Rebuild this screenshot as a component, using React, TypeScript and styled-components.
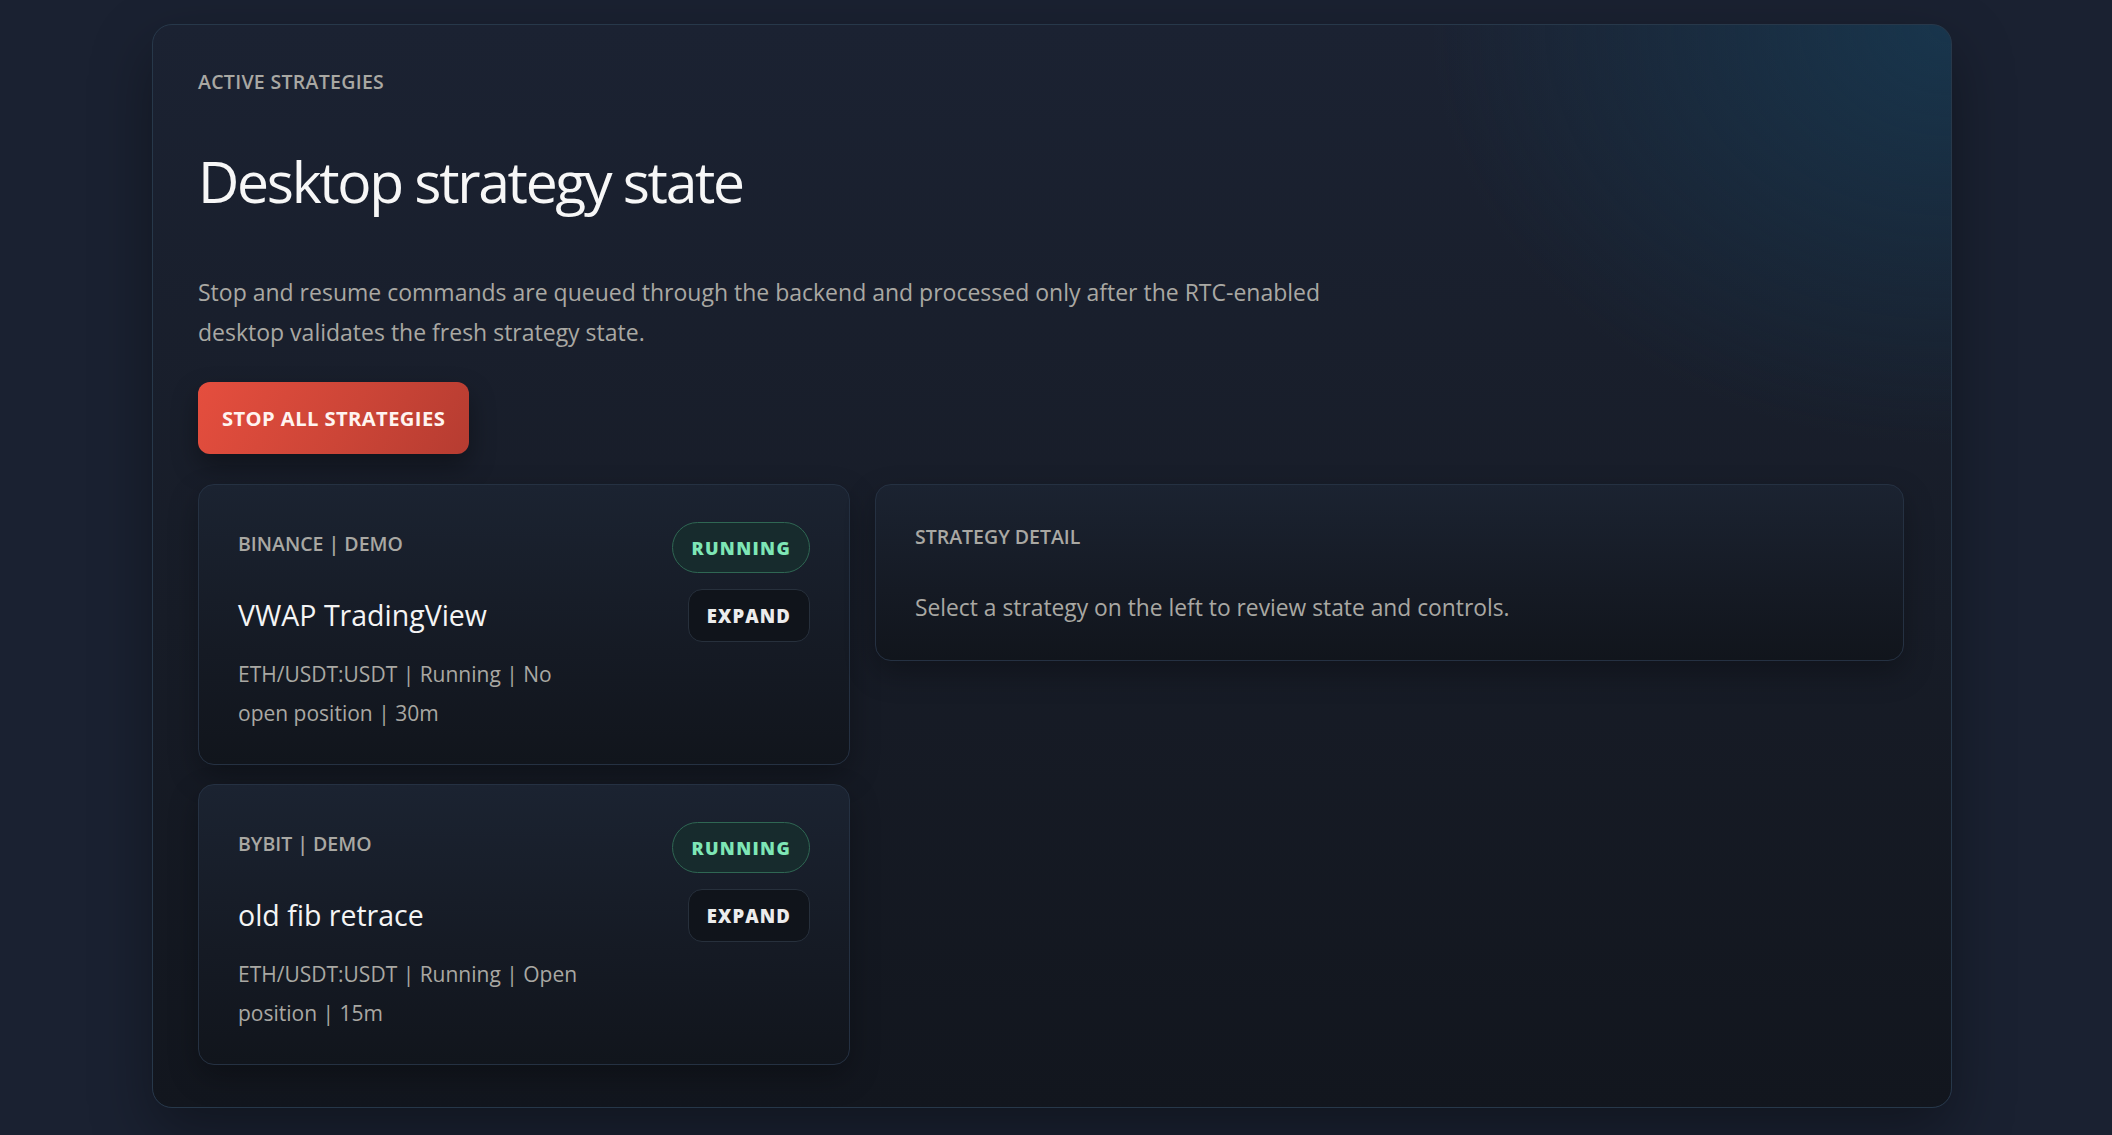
import styled, { createGlobalStyle } from 'styled-components';

/**
 * Desktop strategy state panel
 *  - header: eyebrow, title, lead text, stop-all button
 *  - grid: strategy cards (left) + detail card (right)
 */

interface Strategy {
  id: string;
  venue: string;
  name: string;
  status: string;
  summary: string;
}

const strategies: Strategy[] = [
  {
    id: 'vwap',
    venue: 'BINANCE | DEMO',
    name: 'VWAP TradingView',
    status: 'RUNNING',
    summary: 'ETH/USDT:USDT | Running | No open position | 30m',
  },
  {
    id: 'fib',
    venue: 'BYBIT | DEMO',
    name: 'old fib retrace',
    status: 'RUNNING',
    summary: 'ETH/USDT:USDT | Running | Open position | 15m',
  },
];

const GlobalStyle = createGlobalStyle`
  html, body {
    margin: 0;
    padding: 0;
    background: #1a2131;
  }
  body {
    font-family: 'Open Sans', 'Noto Sans', sans-serif;
    color: #f2f2f2;
  }
  * {
    box-sizing: border-box;
  }
`;

const StrategyCardItem = ({ strategy }: { strategy: Strategy }) => (
  <StrategyCard>
    <Venue>{strategy.venue}</Venue>
    <StatusPill>{strategy.status}</StatusPill>
    <StrategyName>{strategy.name}</StrategyName>
    <ExpandButton type="button">EXPAND</ExpandButton>
    <Summary>{strategy.summary}</Summary>
  </StrategyCard>
);

const App = () => (
  <>
    <GlobalStyle />
    <Page>
      <Panel>
        <Eyebrow>ACTIVE STRATEGIES</Eyebrow>
        <Title>Desktop strategy state</Title>
        <Lead>
          Stop and resume commands are queued through the backend and processed only after the
          RTC-enabled desktop validates the fresh strategy state.
        </Lead>
        <StopAllButton type="button">STOP ALL STRATEGIES</StopAllButton>
        <Layout>
          <StrategyList>
            {strategies.map((s) => (
              <StrategyCardItem key={s.id} strategy={s} />
            ))}
          </StrategyList>
          <DetailCard>
            <DetailLabel>STRATEGY DETAIL</DetailLabel>
            <DetailText>Select a strategy on the left to review state and controls.</DetailText>
          </DetailCard>
        </Layout>
      </Panel>
    </Page>
  </>
);

export default App;

const Page = styled.div`
  min-height: 1135px;
  padding: 24px 0 26px 152px;
  background: #1a2131;
`;

const Panel = styled.section`
  width: 1800px;
  padding: 45px 47px 42px 45px;
  border: 1px solid #27384a;
  border-radius: 20px;
  background:
    radial-gradient(ellipse 520px 420px at 100% 0%, rgba(22, 66, 94, 0.6), rgba(22, 66, 94, 0) 100%),
    linear-gradient(180deg, #1b2232 0%, #171c27 55%, #12161e 100%);
  box-shadow: 0 24px 60px rgba(0, 0, 0, 0.35);
`;

const Eyebrow = styled.div`
  color: #a9a8a3;
  font-size: 19.5px;
  line-height: 24px;
  font-weight: 600;
  letter-spacing: 0.3px;
`;

const Title = styled.h1`
  margin: 56px 0 0;
  color: #f7f7f7;
  font-size: 57px;
  line-height: 63px;
  font-weight: 400;
  letter-spacing: -2.3px;
`;

const Lead = styled.p`
  margin: 59px 0 0;
  max-width: 1160px;
  color: #a9a8a3;
  font-size: 23px;
  line-height: 40px;
`;

const StopAllButton = styled.button`
  display: flex;
  align-items: center;
  height: 72px;
  margin-top: 30px;
  padding: 0 24px;
  border: none;
  border-radius: 12px;
  background: linear-gradient(120deg, #e54e3e 0%, #cc4537 55%, #b63c31 100%);
  color: #fff4f0;
  font-family: inherit;
  font-size: 20.2px;
  font-weight: 700;
  letter-spacing: 0.4px;
  box-shadow: 0 12px 26px rgba(0, 0, 0, 0.35);
  cursor: pointer;
`;

const Layout = styled.div`
  display: grid;
  grid-template-columns: 652px 1fr;
  gap: 25px;
  align-items: start;
  margin-top: 30px;
`;

const StrategyList = styled.div`
  display: flex;
  flex-direction: column;
  gap: 19px;
`;

const cardSurface = `
  border: 1px solid #253142;
  border-radius: 16px;
  background: linear-gradient(180deg, #1b2331 0%, #151a24 60%, #11151c 100%);
  box-shadow: 0 12px 30px rgba(0, 0, 0, 0.28);
`;

const StrategyCard = styled.article`
  ${cardSurface}
  display: grid;
  grid-template-columns: 1fr auto;
  align-items: center;
  row-gap: 16px;
  padding: 37px 39px 32px;
`;

const Venue = styled.div`
  margin-bottom: 8px;
  color: #a9a8a3;
  font-size: 19.5px;
  font-weight: 600;
`;

const StatusPill = styled.span`
  justify-self: end;
  display: flex;
  align-items: center;
  height: 51px;
  padding: 0 18px;
  border: 1px solid #2f6753;
  border-radius: 999px;
  background: #172b2d;
  color: #7ee6b6;
  font-size: 18px;
  font-weight: 800;
  letter-spacing: 1.3px;
`;

const StrategyName = styled.h3`
  margin: 0 0 2px;
  color: #f4f4f4;
  font-size: 28.5px;
  font-weight: 400;
`;

const ExpandButton = styled.button`
  justify-self: end;
  display: flex;
  align-items: center;
  height: 53px;
  padding: 0 18px;
  border: 1px solid #27303c;
  border-radius: 14px;
  background: #10141b;
  color: #ececec;
  font-family: inherit;
  font-size: 18.5px;
  font-weight: 800;
  letter-spacing: 1.1px;
  cursor: pointer;
`;

const Summary = styled.p`
  grid-column: 1 / -1;
  max-width: 355px;
  margin: -3px 0 0;
  color: #a9a8a3;
  font-size: 21px;
  line-height: 38.6px;
`;

const DetailCard = styled.aside`
  ${cardSurface}
  padding: 40px 39px 35px;
`;

const DetailLabel = styled.div`
  color: #a9a8a3;
  font-size: 19.5px;
  line-height: 24px;
  font-weight: 600;
`;

const DetailText = styled.p`
  margin: 42px 0 0;
  color: #a9a8a3;
  font-size: 22.8px;
  line-height: 34px;
`;
